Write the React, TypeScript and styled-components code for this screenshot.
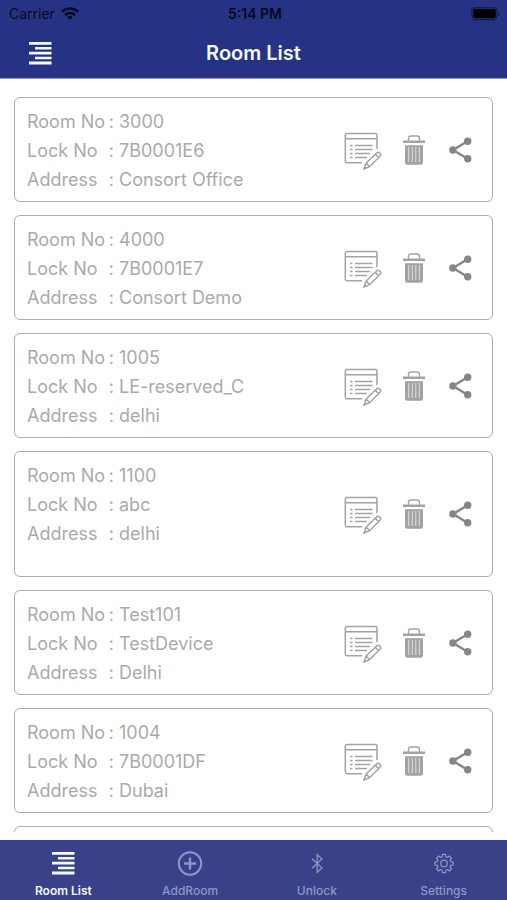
import React from "react";
import styled, { createGlobalStyle } from "styled-components";

const GlobalStyle = createGlobalStyle`
  *, *::before, *::after { box-sizing: border-box; }
  body { margin: 0; background: #ffffff; }
  button { font: inherit; color: inherit; background: none; border: 0; padding: 0; cursor: pointer; }
  svg { display: block; }
`;

const Screen = styled.div`
  display: flex;
  flex-direction: column;
  height: 100vh;
  font-family: Inter, "Liberation Sans", sans-serif;
  background: #ffffff;
`;

const Header = styled.header`
  flex: none;
  background: #263384;
  border-bottom: 1px solid #8f9ccb;
`;

const StatusBar = styled.div`
  display: grid;
  grid-template-columns: 1fr auto 1fr;
  align-items: center;
  height: 27px;
  padding: 0 6px 0 9px;
  font-size: 14px;
  color: #070a1c;
`;

const Carrier = styled.span`
  display: flex;
  align-items: center;
  gap: 6px;
`;

const Clock = styled.time`
  font-weight: 600;
`;

const Battery = styled.span`
  justify-self: end;
`;

const NavBar = styled.div`
  display: grid;
  grid-template-columns: 1fr auto 1fr;
  align-items: center;
  height: 51px;
  padding: 0 28px;
`;

const MenuButton = styled.button`
  justify-self: start;
  color: #f4f8ff;
`;

const Title = styled.h1`
  margin: 0;
  font-size: 20px;
  font-weight: 600;
  color: #f4f8ff;
`;

const RoomList = styled.ul`
  flex: 1;
  min-height: 0;
  overflow: hidden;
  margin: 0 0 8px;
  padding: 18px 14px 0;
  display: flex;
  flex-direction: column;
  gap: 13px;
  list-style: none;
`;

const Card = styled.li<{ $tall?: boolean }>`
  flex: none;
  display: flex;
  align-items: center;
  justify-content: space-between;
  min-height: ${(p) => (p.$tall ? 126 : 105)}px;
  padding: 0 20px 0 12px;
  border: 1px solid #adadad;
  border-radius: 6px;
`;

const Details = styled.dl`
  align-self: flex-start;
  margin: 0;
  padding: 9px 0 7px;
  font-size: 18px;
  line-height: 29px;
  color: #aaaaaa;
`;

const Detail = styled.div`
  display: flex;
  gap: 5px;
`;

const Label = styled.dt`
  display: flex;
  justify-content: space-between;
  width: 87px;
  white-space: nowrap;
  &::after { content: ":"; }
`;

const Value = styled.dd`
  margin: 0;
`;

const Actions = styled.div`
  display: flex;
  align-items: center;
  gap: 21px;
`;

const IconButton = styled.button<{ $dark?: boolean }>`
  color: ${(p) => (p.$dark ? "#868686" : "#a3a3a3")};
`;

const TabBar = styled.nav`
  flex: none;
  display: grid;
  grid-template-columns: repeat(4, 1fr);
  height: 60px;
  background: #394288;
`;

const Tab = styled.button<{ $active?: boolean }>`
  display: flex;
  flex-direction: column;
  align-items: center;
  padding-top: 10px;
  gap: 7px;
  font-size: 12px;
  line-height: 16px;
  font-weight: ${(p) => (p.$active ? 600 : 500)};
  color: ${(p) => (p.$active ? "#f4f8ff" : "#8d97c9")};
`;

const ListIcon = () => (
  <svg width="24" height="26" viewBox="0 0 24 26" fill="currentColor" aria-hidden="true">
    <path d="M1 2h22.5v2.8H1zM7 7h16.5v2.6H7zM1 11.7h22.5v2.8H1zM7 16.7h16.5v2.6H7zM1 21.6h22.5v2.8H1z" />
  </svg>
);

const WifiIcon = () => (
  <svg width="18" height="14" viewBox="0 0 18 14" fill="none" stroke="currentColor" strokeWidth="2.5" aria-hidden="true">
    <path d="M.9 4.7a11.6 11.6 0 0 1 16.2 0M4 8a7.2 7.2 0 0 1 10 0" />
    <path d="M9 13 6.2 10.1a4 4 0 0 1 5.6 0z" fill="currentColor" stroke="none" />
  </svg>
);

const BatteryIcon = () => (
  <svg width="30" height="14" viewBox="0 0 30 14" aria-hidden="true">
    <rect x="1" y=".6" width="25" height="12" rx="3.5" fill="none" stroke="#131c50" strokeWidth="1.2" />
    <rect x="2.2" y="1.9" width="22.6" height="9.4" rx="2" fill="#000000" />
    <path d="M27.5 4.6v4q1.5-.6 1.5-2t-1.5-2z" fill="#131c50" />
  </svg>
);

const EditIcon = () => (
  <svg width="38" height="40" viewBox="0 0 38 40" fill="none" stroke="currentColor" strokeWidth="1.5" aria-hidden="true">
    <path d="M33 19V5.2Q33 3.5 31.3 3.5H3Q1.3 3.5 1.3 5.2V31Q1.3 32.7 3 32.7H18M1.3 8.7H33" />
    <path d="M11 15.5h17.5M11 19.5h17.5M11 23.5h15M6 15.5h2.5M6 19.5h2.5M6 23.5h2.5M6 27.5h2.5M11 27.5h12" />
    <path d="M20 39 22.2 33 32.8 22.7Q34.2 21.5 35.8 23 37.5 24.7 36.2 26.1L25.6 36.7ZM22.2 33l3.4 3.7M31.3 24.2l3.4 3.5M20.2 38.8l2.2-1" fill="#ffffff" />
  </svg>
);

const TrashIcon = () => (
  <svg width="24" height="32" viewBox="0 0 24 32" aria-hidden="true">
    <path d="M5.5 7V4.5Q5.5 2 8 2h6q2.5 0 2.5 2.5V7" fill="none" stroke="currentColor" strokeWidth="1.4" />
    <path d="M0 6.5h22v2.6H0zM2 11.2h18V28.5q0 2.3-2.3 2.3H4.3Q2 30.8 2 28.5z" fill="currentColor" />
    <path d="M5.8 13v15M9.3 13v15M12.8 13v15M16.3 13v15" stroke="#e2e2e2" strokeWidth="1" />
  </svg>
);

const ShareIcon = () => (
  <svg width="24" height="28" viewBox="0 0 24 28" fill="currentColor" aria-hidden="true">
    <path d="M19.5 5.3 5 14l14.5 8.7" fill="none" stroke="currentColor" strokeWidth="2.4" />
    <circle cx="19.7" cy="5.3" r="3.7" />
    <circle cx="4.9" cy="14" r="3.7" />
    <circle cx="19.7" cy="22.7" r="3.7" />
  </svg>
);

const AddIcon = () => (
  <svg width="26" height="26" viewBox="0 0 26 26" fill="none" stroke="currentColor" strokeWidth="2" aria-hidden="true">
    <circle cx="13" cy="13.5" r="11.2" />
    <path d="M13 7.5v12M7 13.5h12" strokeWidth="2.3" />
  </svg>
);

const BluetoothIcon = () => (
  <svg width="26" height="26" viewBox="0 0 26 26" fill="none" stroke="currentColor" strokeWidth="1.3" aria-hidden="true">
    <path d="M8 8.8 18 18l-4.8 4.3V4.7L18 9 8 18.2" />
  </svg>
);

const GearIcon = () => {
  const points = Array.from({ length: 8 }, (_, i) => {
    const at = (deg: number, r: number) => {
      const a = ((i * 45 + deg) * Math.PI) / 180;
      return `${(13 + r * Math.sin(a)).toFixed(2)} ${(13.5 - r * Math.cos(a)).toFixed(2)}`;
    };
    return `${at(-15, 7)}L${at(-10, 9.2)}L${at(10, 9.2)}L${at(15, 7)}`;
  });
  return (
    <svg width="26" height="26" viewBox="0 0 26 26" fill="none" stroke="currentColor" strokeWidth="1.2" strokeLinejoin="round" aria-hidden="true">
      <path d={`M${points.join("L")}Z`} />
      <circle cx="13" cy="13.5" r="3.3" />
    </svg>
  );
};

type Room = { room: string; lock: string; address: string; tall?: boolean };

const rooms: Room[] = [
  { room: "3000", lock: "7B0001E6", address: "Consort Office" },
  { room: "4000", lock: "7B0001E7", address: "Consort Demo" },
  { room: "1005", lock: "LE-reserved_C", address: "delhi" },
  { room: "1100", lock: "abc", address: "delhi", tall: true },
  { room: "Test101", lock: "TestDevice", address: "Delhi" },
  { room: "1004", lock: "7B0001DF", address: "Dubai" },
];

const RoomCard = ({ room, lock, address, tall }: Room) => (
  <Card $tall={tall}>
    <Details>
      <Detail><Label>Room No</Label><Value>{room}</Value></Detail>
      <Detail><Label>Lock No</Label><Value>{lock}</Value></Detail>
      <Detail><Label>Address</Label><Value>{address}</Value></Detail>
    </Details>
    <Actions>
      <IconButton aria-label={`Edit room ${room}`}><EditIcon /></IconButton>
      <IconButton aria-label={`Delete room ${room}`}><TrashIcon /></IconButton>
      <IconButton $dark aria-label={`Share room ${room}`}><ShareIcon /></IconButton>
    </Actions>
  </Card>
);

export default function App() {
  return (
    <Screen>
      <GlobalStyle />
      <Header>
        <StatusBar>
          <Carrier>Carrier <WifiIcon /></Carrier>
          <Clock>5:14 PM</Clock>
          <Battery><BatteryIcon /></Battery>
        </StatusBar>
        <NavBar>
          <MenuButton aria-label="Menu"><ListIcon /></MenuButton>
          <Title>Room List</Title>
        </NavBar>
      </Header>
      <RoomList>
        {rooms.map((r) => <RoomCard key={r.room} {...r} />)}
        <Card />
      </RoomList>
      <TabBar>
        <Tab $active aria-current="page"><ListIcon />Room List</Tab>
        <Tab><AddIcon />AddRoom</Tab>
        <Tab><BluetoothIcon />Unlock</Tab>
        <Tab><GearIcon />Settings</Tab>
      </TabBar>
    </Screen>
  );
}
